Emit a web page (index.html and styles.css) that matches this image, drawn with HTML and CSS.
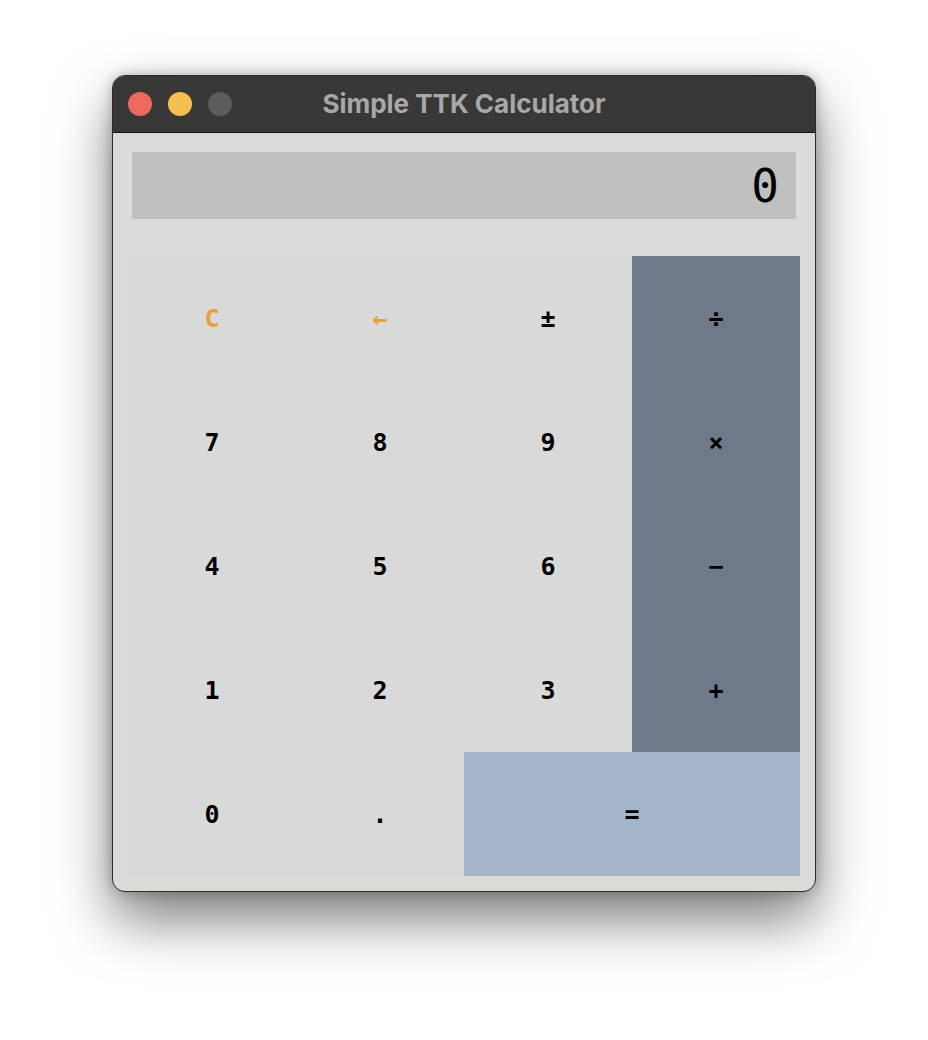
FILE: index.html
```html
<!DOCTYPE html>
<html>
<head>
<meta charset="utf-8">
<title>Simple TTK Calculator</title>
<link rel="stylesheet" href="styles.css">
</head>
<body>
<div class="window">
  <div class="titlebar">
    <div class="lights">
      <span class="light red"></span>
      <span class="light yellow"></span>
      <span class="light gray"></span>
    </div>
    <div class="title">Simple TTK Calculator</div>
  </div>
  <div class="content">
    <div class="display">0</div>
    <div class="keys">
      <div class="key accent">C</div>
      <div class="key accent">←</div>
      <div class="key">±</div>
      <div class="key op">÷</div>
      <div class="key">7</div>
      <div class="key">8</div>
      <div class="key">9</div>
      <div class="key op">×</div>
      <div class="key">4</div>
      <div class="key">5</div>
      <div class="key">6</div>
      <div class="key op">−</div>
      <div class="key">1</div>
      <div class="key">2</div>
      <div class="key">3</div>
      <div class="key op">+</div>
      <div class="key">0</div>
      <div class="key">.</div>
      <div class="key eq">=</div>
    </div>
  </div>
</div>
</body>
</html>
```
FILE: styles.css
```css
html, body {
  margin: 0;
  background: #ffffff;
}
body {
  padding: 75px 0 0 112px;
  height: 1040px;
  box-sizing: border-box;
  overflow: hidden;
}
.window {
  width: 704px;
  height: 817px;
  box-sizing: border-box;
  border: 1px solid #2a2a2a;
  border-radius: 13px;
  background: #dcdbd7;
  overflow: hidden;
  box-shadow: 0 28px 55px rgba(0, 0, 0, 0.5), 0 0 14px rgba(0, 0, 0, 0.25);
  display: flex;
  flex-direction: column;
}
.titlebar {
  height: 56px;
  flex: none;
  background: #383836;
  border-bottom: 1px solid #111;
  display: flex;
  align-items: center;
  position: relative;
}
.lights {
  display: flex;
  gap: 16px;
  padding-left: 15px;
}
.light {
  width: 24px;
  height: 24px;
  border-radius: 50%;
  display: block;
}
.red { background: #ee6a5f; }
.yellow { background: #f5bf4f; }
.gray { background: #5b5b5b; }
.title {
  position: absolute;
  left: 0;
  right: 0;
  top: 0;
  bottom: 0;
  display: flex;
  align-items: center;
  justify-content: center;
  font-family: Inter, "Liberation Sans", sans-serif;
  font-weight: bold;
  font-size: 26px;
  color: #a8a8a6;
  padding-bottom: 2px;
}
.content {
  flex: 1;
  padding: 19px 15px 14px 15px;
  display: flex;
  flex-direction: column;
}
.display {
  margin: 0 4px;
  height: 67px;
  background: #bfbfbf;
  font-family: "DejaVu Sans Mono", monospace;
  font-size: 46px;
  color: #000;
  display: flex;
  align-items: center;
  justify-content: flex-end;
  padding-right: 17px;
}
.keys {
  margin-top: 37px;
  display: grid;
  grid-template-columns: repeat(4, 168px);
  grid-template-rows: repeat(5, 124px);
}
.key {
  background: #d9d9d9;
  display: flex;
  align-items: center;
  justify-content: center;
  font-family: "DejaVu Sans Mono", monospace;
  font-weight: bold;
  font-size: 25px;
  color: #000;
}
.accent { color: #e8a035; }
.op { background: #6e7a8a; }
.eq {
  background: #a5b4cb;
  grid-column: span 2;
}
```
